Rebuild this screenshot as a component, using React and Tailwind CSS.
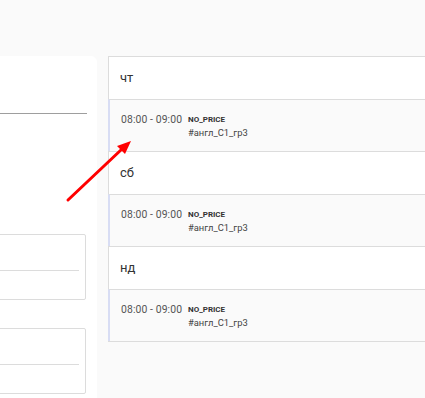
export default function App() {
  const days = ["чт", "сб", "нд"];
  return (
    <div className="relative w-[425px] h-[398px] overflow-hidden bg-[#fafafa]" style={{ fontFamily: "Roboto, 'Noto Sans', sans-serif" }}>
      <div className="flex pt-[56px] h-full">
        <div className="w-[97px] shrink-0 bg-white rounded-tr-[6px] flex flex-col">
          <div className="h-[58px] border-b border-[#9e9e9e] mr-[10px]"></div>
          <div className="h-[120px]"></div>
          <div className="-ml-[10px] w-[96px] h-[66px] border border-[#dcdcdc] rounded-[2px] flex flex-col">
            <div className="h-[36px] border-b border-[#dcdcdc] mr-[6px]"></div>
          </div>
          <div className="h-[28px]"></div>
          <div className="-ml-[10px] w-[96px] h-[66px] border border-[#dcdcdc] rounded-[2px] flex flex-col">
            <div className="h-[36px] border-b border-[#dcdcdc] mr-[6px]"></div>
          </div>
        </div>
        <div className="w-[11px] shrink-0"></div>
        <div className="flex-1 min-w-[330px] self-start border-b border-[#dcdcdc]">
          {days.map((d) => (
            <div key={d}>
              <div className="h-[43px] bg-white border-l border-t border-[#dcdcdc] flex items-center pl-[11px] text-[13px] text-[#333]">
                {d}
              </div>
              <div className="h-[52px] bg-[#fafafa] border-t border-l-2 border-t-[#dcdcdc] border-l-[#d8ddf4] flex pl-[11px] pt-[13px]">
                <div className="text-[10.4px] text-[#555] leading-[13px] w-[67px] tracking-[0.1px]">08:00 - 09:00</div>
                <div className="flex flex-col">
                  <div className="text-[8px] font-bold text-[#333] leading-[13px]">NO_PRICE</div>
                  <div className="text-[9.4px] text-[#444] leading-[13px]">#англ_С1_гр3</div>
                </div>
              </div>
            </div>
          ))}
        </div>
      </div>
      <svg className="absolute left-0 top-0 pointer-events-none" width="425" height="398">
        <line x1="68" y1="200" x2="122" y2="149" stroke="#f00" strokeWidth="3" strokeLinecap="round" />
        <polygon points="131,141 117,146 125,154" fill="#f00" />
      </svg>
    </div>
  );
}
